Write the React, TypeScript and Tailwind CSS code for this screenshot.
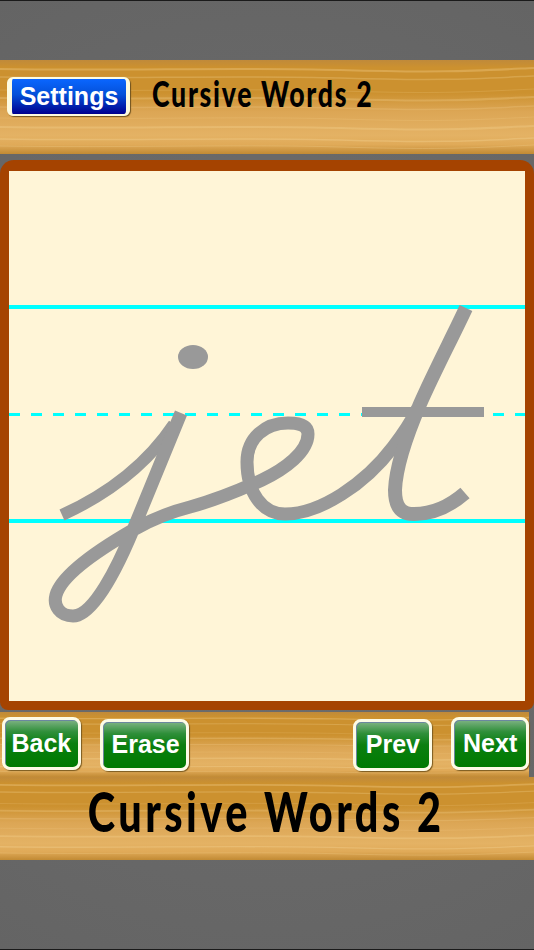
const display = "font-['Lato'] font-black text-black";
const label = "font-['Liberation_Sans'] font-bold text-white";

const grainLines = [
  { y: 9, o: 0.35, w: 2 },
  { y: 17, o: 0.3, w: 1.5 },
  { y: 30, o: 0.2, w: 1 },
  { y: 38, o: 0.3, w: 2 },
  { y: 47, o: 0.25, w: 1.5 },
  { y: 58, o: 0.2, w: 1 },
  { y: 67, o: 0.35, w: 2 },
  { y: 79, o: 0.4, w: 1.5 },
  { y: 86, o: 0.3, w: 1 },
];

function Grain() {
  return (
    <svg className="absolute inset-0 h-full w-full" viewBox="0 0 534 94" preserveAspectRatio="none" aria-hidden="true">
      {grainLines.map((l, i) => (
        <path
          key={i}
          d={`M0 ${l.y} C120 ${l.y + 2} 240 ${l.y - 2} 340 ${l.y + 1} S470 ${l.y + 2} 534 ${l.y - 1}`}
          fill="none"
          stroke="#f3d08e"
          strokeOpacity={l.o}
          strokeWidth={l.w}
        />
      ))}
    </svg>
  );
}

function Wood({ className, children }: { className: string; children: React.ReactNode }) {
  return (
    <div className={`relative bg-[linear-gradient(to_bottom,#c08a3a_0%,#cc912f_8%,#cc912f_35%,#dca655_55%,#e4b264_80%,#e0aa58_90%,#c18a34_100%)] ${className}`}>
      <Grain />
      {children}
    </div>
  );
}

function GreenButton({ text, className }: { text: string; className: string }) {
  return (
    <button className={`relative flex items-center justify-center rounded-[8px] border-[3px] border-[#fdfbe6] bg-[linear-gradient(to_bottom,#7fb384_0%,#2f8f3a_25%,#0b7f10_50%,#007a00_100%)] shadow-[1px_1px_1px_#7a5a20,inset_1px_1px_0_#6b87a0] ${label} text-[25px] ${className}`}>
      {text}
    </button>
  );
}

// drawn in page coordinates, the svg is shifted back by the paper's offset
function Letters() {
  return (
    <svg className="absolute left-[-9px] top-[-171px] h-[950px] w-[534px]" viewBox="0 0 534 950" aria-hidden="true">
      <ellipse cx="193" cy="357" rx="15" ry="12" fill="#999999" />
      <g fill="none" stroke="#999999">
        <path strokeWidth="12" d="M62 515 C108 494 146 466 174 424" />
        <path strokeWidth="13" d="M181 413 L133 530 C118 566 94 616 73 616 C60 616 53 606 56 595 C62 574 100 549 133 530 C156 517 174 511 190 507 C216 500 240 490 262 480 C285 469 308 452 308 434 C308 425 298 423 288 423 C265 423 247 438 247 462 C247 492 262 514 285 514 C320 514 365 484 393 447 C403 434 411 422 418 408" />
        <path strokeWidth="14" d="M466 308 C452 338 434 372 420 404 C408 432 396 465 395 490 C395 508 402 514 414 514 C432 514 450 506 465 493" />
      </g>
      <rect x="362" y="407" width="122" height="10" fill="#999999" />
    </svg>
  );
}

export default function App() {
  return (
    <div className="relative flex h-[950px] w-[534px] flex-col overflow-hidden bg-[radial-gradient(circle_at_50%_50%,#707070_0%,#646464_100%)]">
      <div className="h-px bg-[#1a1a1a]" />
      <div className="h-[59px]" />

      <Wood className="flex h-[94px] items-start pl-[7px] pt-[17px]">
        <button className={`relative flex h-[39px] w-[123px] items-center justify-center rounded-[6px] border-y-[2px] border-l-[5px] border-r-[4px] border-[#fdfbe0] bg-[linear-gradient(to_bottom,#0a66ff_0%,#0450d8_45%,#00008f_100%)] shadow-[1px_1px_1px_#6f5320] ${label} text-[25px]`}>
          Settings
        </button>
        <span className={`relative ml-[22px] mt-[-9px] origin-left scale-x-[0.74] text-[36px] leading-[50px] tracking-[2.3px] whitespace-nowrap ${display}`}>
          Cursive Words 2
        </span>
      </Wood>

      <div className="h-[6px]" />

      <div className="h-[550px] rounded-t-[14px] rounded-b-[8px] bg-[#a54300] px-[9px] pt-[11px] pb-[9px]">
        <div className="relative flex h-[530px] flex-col overflow-hidden bg-[#fff5d7]">
          <div className="mt-[134px] h-[4px] bg-[#00ffff]" />
          <div className="mt-[104px] h-[3px] bg-[repeating-linear-gradient(to_right,#00ffff_0_11px,transparent_11px_22px)]" />
          <div className="mt-[103px] h-[4px] bg-[#00ffff]" />
          <Letters />
        </div>
      </div>

      <div className="h-[2px]" />

      <Wood className="flex h-[65px] w-[529px] items-start pl-[2px]">
        <GreenButton text="Back" className="mt-[5px] h-[53px] w-[79px]" />
        <GreenButton text="Erase" className="ml-[19px] mt-[7px] h-[52px] w-[90px] pl-[2px]" />
        <GreenButton text="Prev" className="ml-[164px] mt-[7px] h-[52px] w-[79px]" />
        <GreenButton text="Next" className="ml-[19px] mt-[5px] h-[53px] w-[78px]" />
      </Wood>

      <Wood className="flex h-[83px] justify-center">
        <span className={`relative mt-[-1px] ml-[-1px] origin-center scale-x-[0.74] text-[56px] leading-[70px] tracking-[4.7px] whitespace-nowrap ${display}`}>
          Cursive Words 2
        </span>
      </Wood>

      <div className="flex-1" />
      <div className="h-px bg-[#1a1a1a]" />
    </div>
  );
}
